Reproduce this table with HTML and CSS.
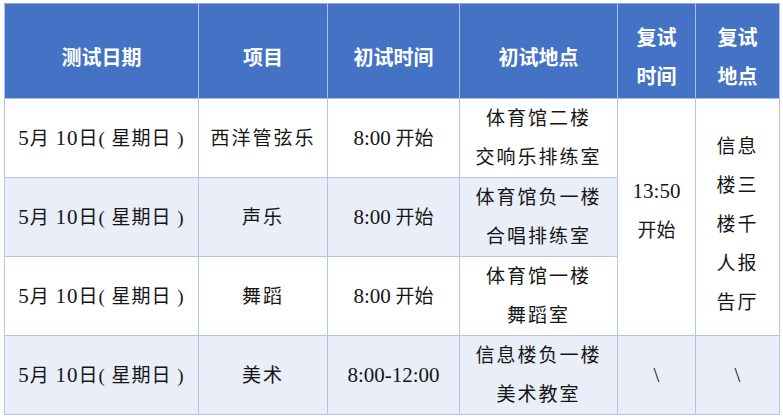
FILE: index.html
```html
<!DOCTYPE html>
<html lang="zh-CN">
<head>
<meta charset="utf-8">
<title>测试安排</title>
<link rel="stylesheet" href="styles.css">
</head>
<body>
<table class="sched">
  <colgroup>
    <col class="c-date"><col class="c-item"><col class="c-time"><col class="c-loc"><col class="c-rtime"><col class="c-rloc">
  </colgroup>
  <thead>
    <tr class="head">
      <th>测试日期</th>
      <th>项目</th>
      <th>初试时间</th>
      <th>初试地点</th>
      <th>复试<br>时间</th>
      <th>复试<br>地点</th>
    </tr>
  </thead>
  <tbody>
    <tr class="r1">
      <td class="date"><span class="num">5</span>月 <span class="num">10</span>日( 星期日 )</td>
      <td class="item">西洋管弦乐</td>
      <td><span class="num">8:00</span> 开始</td>
      <td class="loc">体育馆二楼<br>交响乐排练室</td>
      <td class="span rtime" rowspan="3"><span class="num">13:50</span><br>开始</td>
      <td class="span rloc" rowspan="3">信息<br>楼三<br>楼千<br>人报<br>告厅</td>
    </tr>
    <tr class="r2 alt">
      <td class="date"><span class="num">5</span>月 <span class="num">10</span>日( 星期日 )</td>
      <td class="item">声乐</td>
      <td><span class="num">8:00</span> 开始</td>
      <td class="loc">体育馆负一楼<br>合唱排练室</td>
    </tr>
    <tr class="r3">
      <td class="date"><span class="num">5</span>月 <span class="num">10</span>日( 星期日 )</td>
      <td class="item">舞蹈</td>
      <td><span class="num">8:00</span> 开始</td>
      <td class="loc">体育馆一楼<br>舞蹈室</td>
    </tr>
    <tr class="r4 alt">
      <td class="date"><span class="num">5</span>月 <span class="num">10</span>日( 星期日 )</td>
      <td class="item">美术</td>
      <td><span class="num">8:00-12:00</span></td>
      <td class="loc">信息楼负一楼<br>美术教室</td>
      <td><span class="num">\</span></td>
      <td><span class="num">\</span></td>
    </tr>
  </tbody>
</table>
</body>
</html>
```
FILE: styles.css
```css
html, body {
  margin: 0;
  padding: 0;
  background: #ffffff;
}
body {
  padding: 3px 4px 0 4px;
}
.sched {
  border-collapse: collapse;
  table-layout: fixed;
  width: 775px;
  font-family: "Liberation Serif", "Noto Sans CJK SC", serif;
  font-size: 19px;
  color: #151515;
  border: 1px solid #8eaadb;
}
.c-date { width: 194px; }
.c-item { width: 129px; }
.c-time { width: 132px; }
.c-loc { width: 158px; }
.c-rtime { width: 78px; }
.c-rloc { width: 84px; }

.head th {
  background: #4472c4;
  color: #ffffff;
  font-family: "Noto Sans CJK SC", sans-serif;
  font-weight: 700;
  font-size: 20px;
  line-height: 39px;
  height: 95px;
  padding: 10px 0 0 0;
  box-sizing: border-box;
  border: 1px solid #a9c0e9;
  border-top-color: #8eaadb;
  text-align: center;
  vertical-align: middle;
}
td {
  border: 1px solid #b4c6e7;
  text-align: center;
  vertical-align: middle;
  line-height: 39px;
  padding: 0;
  background: #ffffff;
}
tbody tr { height: 79px; }
tbody tr.r2 { height: 78px; }
tr.alt td { background: #e9eef8; }
td.span { background: #ffffff; }
.num { font-size: 21px; }
.date { letter-spacing: 1px; }
.item { letter-spacing: 2px; }
.loc { letter-spacing: 2px; }
.rtime { padding-bottom: 12px; }
.rloc { letter-spacing: 2px; padding-top: 14px; }
```
